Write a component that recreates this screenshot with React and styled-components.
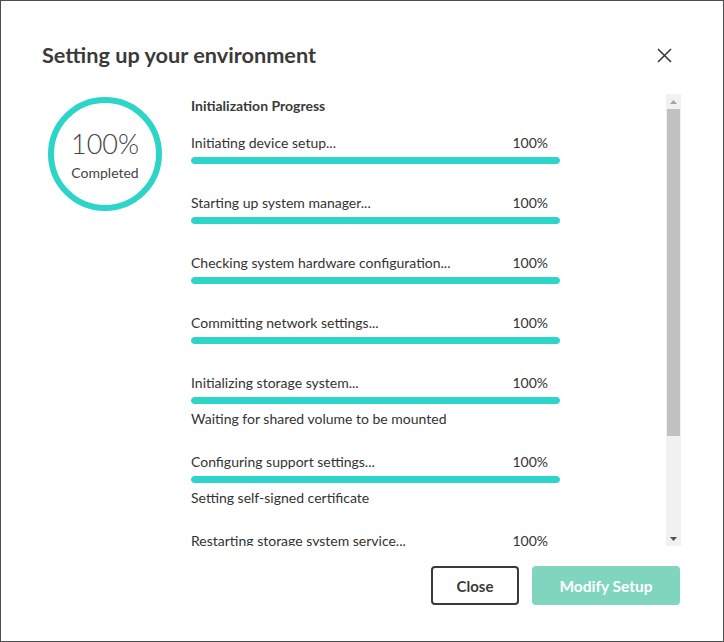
import React from 'react'
import styled, { createGlobalStyle } from 'styled-components'

const GlobalStyle = createGlobalStyle`
  html, body {
    margin: 0;
    padding: 0;
    background: #ffffff;
  }
  body {
    font-family: Lato, 'Noto Sans', sans-serif;
    color: #333333;
  }
  * {
    box-sizing: border-box;
  }
`

const Dialog = styled.div`
  width: 724px;
  height: 642px;
  border: 1px solid #4d4d4d;
  background: #ffffff;
  display: flex;
  flex-direction: column;
`

const Header = styled.div`
  display: flex;
  justify-content: space-between;
  align-items: center;
  padding: 40px 51px 0 41px;
`

const Title = styled.h1`
  margin: 0;
  font-size: 21.7px;
  line-height: 28px;
  font-weight: 700;
  color: #3a3a3a;
`

const CloseIcon = styled.button`
  border: none;
  background: none;
  padding: 0;
  width: 16px;
  height: 16px;
  display: flex;
  align-items: center;
  justify-content: center;
  cursor: pointer;
`

const Body = styled.div`
  display: flex;
  align-items: flex-start;
  padding: 25px 0 0 47px;
`

const Ring = styled.div`
  width: 114px;
  height: 114px;
  margin-top: 3px;
  border-radius: 50%;
  border: 6px solid #2dd4c8;
  display: flex;
  flex-direction: column;
  align-items: center;
  justify-content: center;
  flex-shrink: 0;
`

const RingValue = styled.div`
  font-size: 27px;
  line-height: 34px;
  font-weight: 300;
  color: #444444;
`

const RingLabel = styled.div`
  font-size: 14px;
  line-height: 18px;
  color: #444444;
  margin-top: 3px;
`

const ScrollArea = styled.div`
  margin-left: 29px;
  width: 490px;
  height: 452px;
  display: flex;
`

const Viewport = styled.div`
  flex: 1;
  height: 100%;
  overflow: hidden;
`

const Content = styled.div`
  padding-top: 2px;
`

const Scrollbar = styled.div`
  width: 15px;
  height: 100%;
  background: #f1f1f1;
  display: flex;
  flex-direction: column;
  align-items: center;
`

const ScrollArrow = styled.div`
  width: 15px;
  height: 15px;
  display: flex;
  align-items: center;
  justify-content: center;
`

const ScrollTrack = styled.div`
  flex: 1;
  width: 100%;
  display: flex;
  justify-content: center;
`

const ScrollThumb = styled.div`
  width: 13px;
  height: 327px;
  background: #c1c1c1;
`

const SectionTitle = styled.div`
  font-size: 14px;
  line-height: 20px;
  font-weight: 700;
  color: #3a3a3a;
  margin-bottom: 17px;
`

const Step = styled.div`
  width: 369px;
  padding-bottom: 23px;
`

const StepHead = styled.div`
  display: flex;
  justify-content: space-between;
  padding-right: 12px;
  font-size: 14px;
  line-height: 20px;
  color: #333333;
`

const Bar = styled.div`
  height: 7px;
  margin: 4px 0 6px;
  border-radius: 4px;
  background: #eeeeee;
  overflow: hidden;
`

const Fill = styled.div`
  height: 100%;
  border-radius: 4px;
  background: #2dd4c8;
`

const StepNote = styled.div`
  font-size: 14px;
  line-height: 20px;
  color: #333333;
  margin-top: -1px;
`

const Footer = styled.div`
  display: flex;
  justify-content: flex-end;
  gap: 13px;
  padding: 20px 43px 0 0;
`

const Button = styled.button`
  height: 39px;
  padding: 0 ${p => (p.primary ? '24px' : '22px')};
  min-width: ${p => (p.primary ? '148px' : '88px')};
  border-radius: 4px;
  font-family: Lato, 'Noto Sans', sans-serif;
  font-size: ${p => (p.primary ? '15.5px' : '15px')};
  font-weight: 700;
  cursor: pointer;
  border: ${p => (p.primary ? '2px solid #80d5bf' : '2px solid #3a3a3a')};
  background: ${p => (p.primary ? '#80d5bf' : '#ffffff')};
  color: ${p => (p.primary ? '#ffffff' : '#3a3a3a')};
`

const steps = [
  { label: 'Initiating device setup...', value: 100 },
  { label: 'Starting up system manager...', value: 100 },
  { label: 'Checking system hardware configuration...', value: 100 },
  { label: 'Committing network settings...', value: 100 },
  {
    label: 'Initializing storage system...',
    value: 100,
    note: 'Waiting for shared volume to be mounted',
  },
  {
    label: 'Configuring support settings...',
    value: 100,
    note: 'Setting self-signed certificate',
  },
  { label: 'Restarting storage system service...', value: 100 },
]

const App = () => {
  return (
    <>
      <GlobalStyle />
      <Dialog>
        <Header>
          <Title>Setting up your environment</Title>
          <CloseIcon aria-label="Close">
            <svg width="15" height="15" viewBox="0 0 15 15">
              <path
                d="M1 1 L14 14 M14 1 L1 14"
                stroke="#333"
                strokeWidth="1.5"
                fill="none"
              />
            </svg>
          </CloseIcon>
        </Header>
        <Body>
          <Ring>
            <RingValue>100%</RingValue>
            <RingLabel>Completed</RingLabel>
          </Ring>
          <ScrollArea>
            <Viewport>
              <Content>
                <SectionTitle>Initialization Progress</SectionTitle>
                {steps.map(step => (
                  <Step key={step.label}>
                    <StepHead>
                      <span>{step.label}</span>
                      <span>{step.value}%</span>
                    </StepHead>
                    <Bar>
                      <Fill style={{ width: `${step.value}%` }} />
                    </Bar>
                    {step.note && <StepNote>{step.note}</StepNote>}
                  </Step>
                ))}
              </Content>
            </Viewport>
            <Scrollbar>
              <ScrollArrow>
                <svg width="7" height="4" viewBox="0 0 7 4">
                  <path d="M3.5 0 L7 4 L0 4 Z" fill="#a3a3a3" />
                </svg>
              </ScrollArrow>
              <ScrollTrack>
                <ScrollThumb />
              </ScrollTrack>
              <ScrollArrow>
                <svg width="7" height="4" viewBox="0 0 7 4">
                  <path d="M0 0 L7 0 L3.5 4 Z" fill="#505050" />
                </svg>
              </ScrollArrow>
            </Scrollbar>
          </ScrollArea>
        </Body>
        <Footer>
          <Button>Close</Button>
          <Button primary>Modify Setup</Button>
        </Footer>
      </Dialog>
    </>
  )
}

export default App
